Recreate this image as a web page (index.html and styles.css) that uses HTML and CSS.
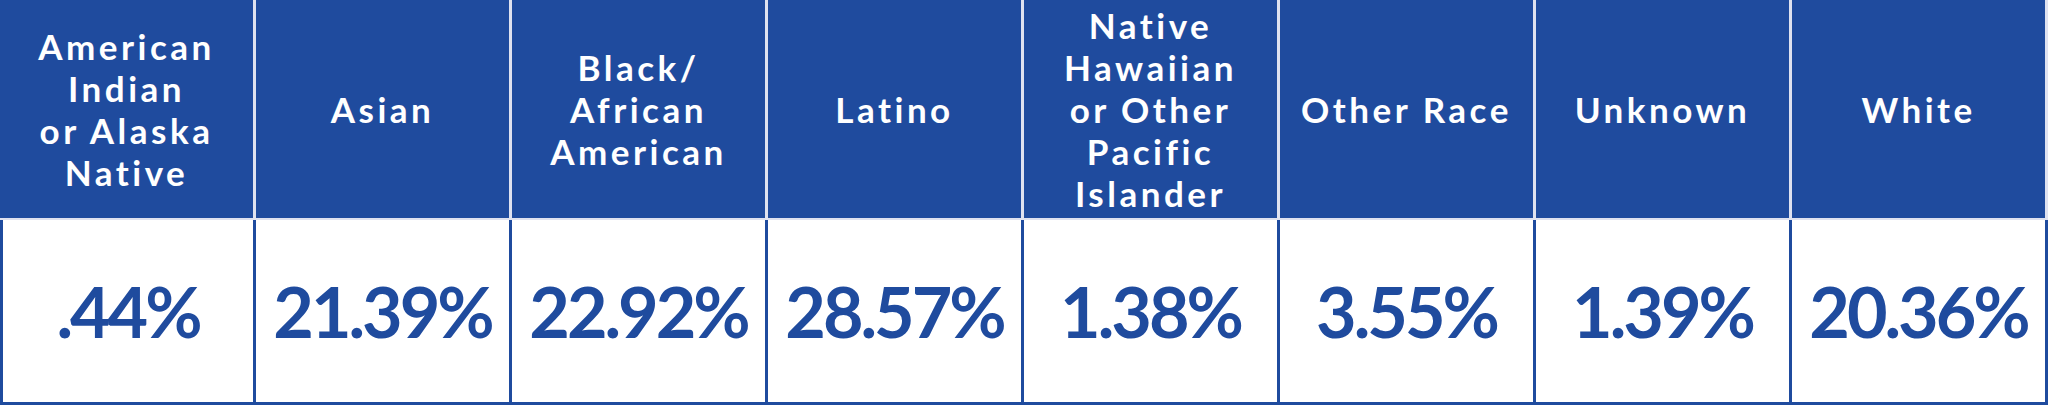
FILE: index.html
```html
<!DOCTYPE html>
<html>
<head>
<meta charset="utf-8">
<link rel="stylesheet" href="styles.css">
</head>
<body>
<div class="table">
  <div class="head">American<br>Indian<br>or Alaska<br>Native</div>
  <div class="head">Asian</div>
  <div class="head">Black/<br>African<br>American</div>
  <div class="head">Latino</div>
  <div class="head">Native<br>Hawaiian<br>or Other<br>Pacific<br>Islander</div>
  <div class="head">Other Race</div>
  <div class="head">Unknown</div>
  <div class="head">White</div>
  <div class="cell first">.44%</div>
  <div class="cell">21.39%</div>
  <div class="cell">22.92%</div>
  <div class="cell">28.57%</div>
  <div class="cell">1.38%</div>
  <div class="cell">3.55%</div>
  <div class="cell">1.39%</div>
  <div class="cell">20.36%</div>
</div>
</body>
</html>
```
FILE: styles.css
```css
* { box-sizing: border-box; }
html, body { margin: 0; padding: 0; background: #ffffff; }
body { width: 2048px; height: 405px; overflow: hidden; }
.table {
  display: grid;
  grid-template-columns: repeat(8, 256px);
  grid-template-rows: 220px 185px;
  font-family: "Lato", "Liberation Sans", sans-serif;
  font-weight: 700;
}
.head {
  background: #1f4b9e;
  color: #ffffff;
  border-right: 3px solid #dfe2f0;
  border-bottom: 2px solid #dfe2f0;
  display: flex;
  align-items: center;
  justify-content: center;
  text-align: center;
  font-size: 35px;
  line-height: 42px;
  padding: 0 4px;
  letter-spacing: 3.5px;
  white-space: nowrap;
}
.cell {
  color: #1f4b9e;
  border-right: 3px solid #1f4b9e;
  border-bottom: 3px solid #1f4b9e;
  display: flex;
  align-items: center;
  justify-content: center;
  font-size: 70px;
  letter-spacing: -3px;
  white-space: nowrap;
}
.cell.first { border-left: 3px solid #1f4b9e; }
```
